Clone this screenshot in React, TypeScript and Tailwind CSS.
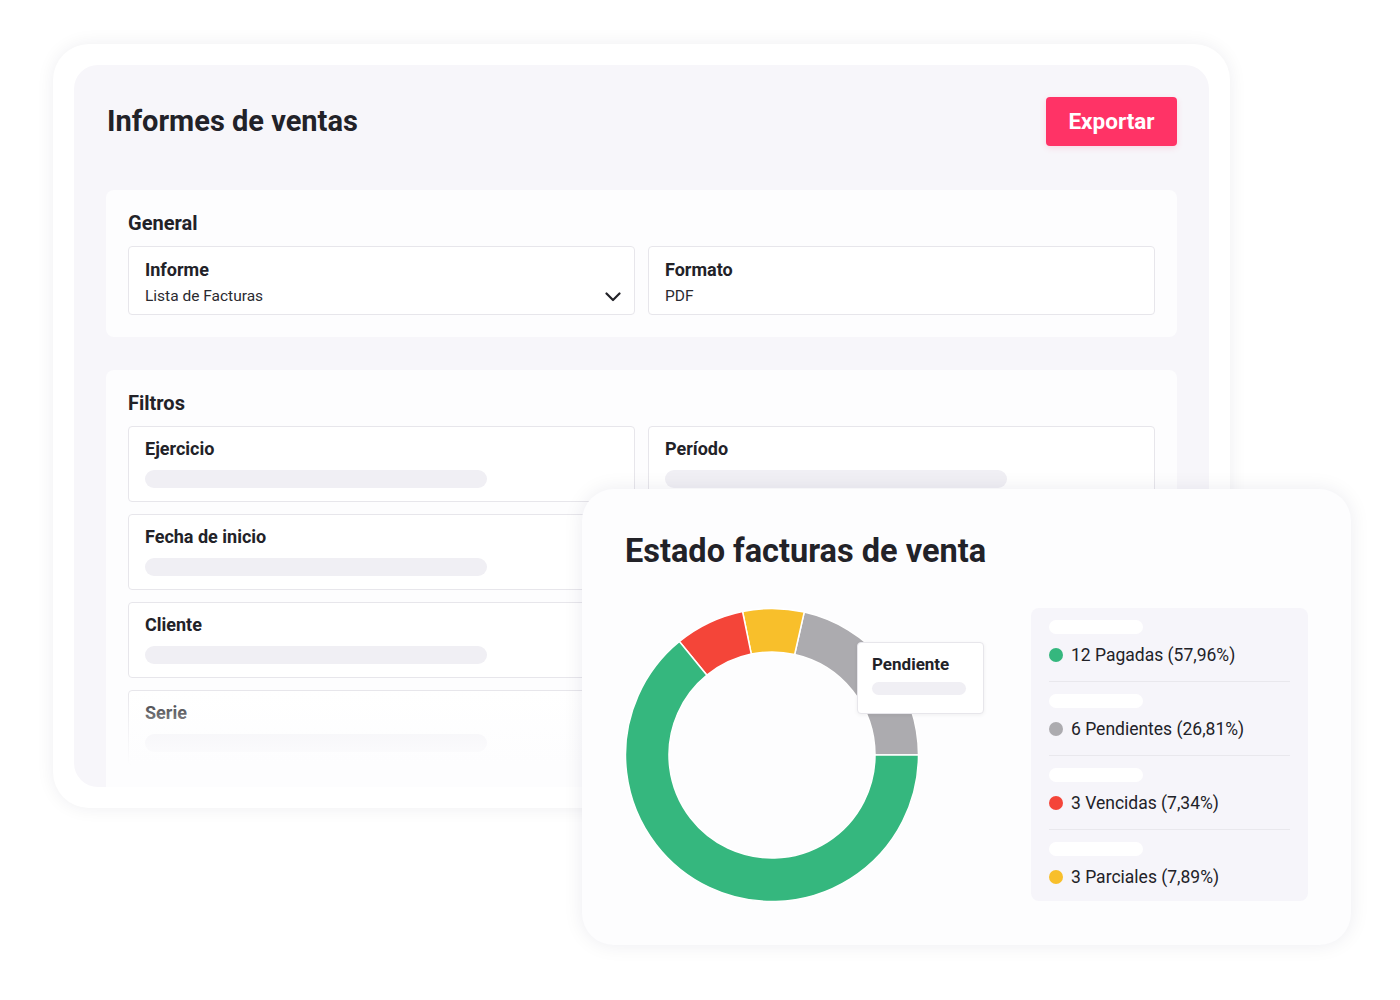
import React from "react";

const font = { fontFamily: "Roboto, 'Noto Sans', sans-serif" };

const CX = 147;
const CY = 147;
const R_OUT = 146.5;
const R_IN = 103;

const pt = (r: number, deg: number) => {
  const a = (deg * Math.PI) / 180;
  return `${(CX + r * Math.cos(a)).toFixed(2)} ${(CY - r * Math.sin(a)).toFixed(2)}`;
};

// angles counter-clockwise from 3 o'clock, as drawn in the picture
const arc = (a0: number, a1: number) => {
  const large = a1 - a0 > 180 ? 1 : 0;
  return `M ${pt(R_OUT, a0)} A ${R_OUT} ${R_OUT} 0 ${large} 0 ${pt(R_OUT, a1)} L ${pt(R_IN, a1)} A ${R_IN} ${R_IN} 0 ${large} 1 ${pt(R_IN, a0)} Z`;
};

const segments = [
  { from: 0, to: 77.3, color: "#acabaf" },
  { from: 77.3, to: 101.6, color: "#f8bf2b" },
  { from: 101.6, to: 129.2, color: "#f44539" },
  { from: 129.2, to: 360, color: "#35b77e" },
];

const legend = [
  { label: "12 Pagadas (57,96%)", color: "bg-[#35b77e]" },
  { label: "6 Pendientes (26,81%)", color: "bg-[#acabaf]" },
  { label: "3 Vencidas (7,34%)", color: "bg-[#f44539]" },
  { label: "3 Parciales (7,89%)", color: "bg-[#f8bf2b]" },
];

const filtros = [
  "Ejercicio",
  "Período",
  "Fecha de inicio",
  "Fecha de fin",
  "Cliente",
  "Vendedor",
  "Serie",
  "Estado",
];

const Chevron = () => (
  <svg width="16" height="10" viewBox="0 0 16 10" fill="none">
    <polyline points="1.5,1.5 8,8 14.5,1.5" stroke="#222228" strokeWidth="2.2" strokeLinecap="round" strokeLinejoin="round" />
  </svg>
);

const FilterField = ({ label }: { label: string }) => (
  <div className="h-[76px] rounded-[4px] border border-[#e7e6eb] bg-white pl-[16px] pt-[10px]">
    <div className="text-[18px] leading-[24px] font-bold text-[#222228]">{label}</div>
    <div className="mt-[9px] h-[18px] w-[342px] rounded-full bg-[#f0eff4]" />
  </div>
);

const Donut = () => (
  <div className="relative w-[294px] h-[294px]">
    <svg width="294" height="294" viewBox="0 0 294 294">
      {segments.map((s) => (
        <path key={s.color} d={arc(s.from, s.to)} fill={s.color} stroke="#ffffff" strokeWidth="1.5" />
      ))}
    </svg>
    <div className="absolute left-[232px] top-[34px] w-[127px] h-[72px] rounded-[4px] border border-[#e7e6eb] bg-white px-[14px] pt-[9px] shadow-[0_1px_4px_rgba(0,0,0,0.06)]">
      <div className="text-[17px] leading-[24px] font-bold text-[#222228]">Pendiente</div>
      <div className="mt-[6px] h-[13px] w-[94px] rounded-full bg-[#f0eff4]" />
    </div>
  </div>
);

export default function App() {
  return (
    <div className="relative w-[1400px] h-[1000px] bg-white overflow-hidden" style={font}>
      {/* informes card */}
      <div className="ml-[53px] mt-[44px] w-[1177px] h-[764px] rounded-[36px] bg-white p-[21px] shadow-[0_0_18px_rgba(30,30,60,0.07)]">
        <div className="h-full rounded-[24px] bg-[#f7f6fa] overflow-hidden px-[32px] pt-[32px] flex flex-col">
          <div className="flex items-center justify-between h-[49px]">
            <h1 className="pl-[1px] text-[29px] font-bold text-[#222228]">Informes de ventas</h1>
            <button className="w-[131px] h-[49px] rounded-[4px] bg-[#ff3366] text-white text-[22.5px] font-bold shadow-[0_2px_6px_rgba(255,51,102,0.15)]">
              Exportar
            </button>
          </div>

          <div className="mt-[44px] rounded-[8px] bg-[#fdfdfe] px-[22px] pt-[21px] pb-[22px]">
            <div className="text-[20px] leading-[24px] font-bold text-[#222228]">General</div>
            <div className="mt-[11px] grid grid-cols-2 gap-x-[13px]">
              <div className="h-[69px] rounded-[4px] border border-[#e7e6eb] bg-white pl-[16px] pr-[13px] pt-[11px] flex items-end justify-between pb-[12px]">
                <div className="self-start">
                  <div className="text-[18px] leading-[24px] font-bold text-[#222228]">Informe</div>
                  <div className="mt-[4px] text-[15.5px] leading-[20px] text-[#2a2a30]">Lista de Facturas</div>
                </div>
                <Chevron />
              </div>
              <div className="h-[69px] rounded-[4px] border border-[#e7e6eb] bg-white pl-[16px] pt-[11px]">
                <div className="text-[18px] leading-[24px] font-bold text-[#222228]">Formato</div>
                <div className="mt-[4px] text-[15.5px] leading-[20px] text-[#2a2a30]">PDF</div>
              </div>
            </div>
          </div>

          <div className="relative mt-[33px] flex-1 rounded-t-[8px] bg-[#fdfdfe] px-[22px] pt-[21px]">
            <div className="text-[20px] leading-[24px] font-bold text-[#222228]">Filtros</div>
            <div className="mt-[11px] grid grid-cols-2 gap-x-[13px] gap-y-[12px]">
              {filtros.map((f) => (
                <FilterField key={f} label={f} />
              ))}
            </div>
            <div className="pointer-events-none absolute left-0 right-0 bottom-0 h-[98px] bg-linear-to-b from-[#fdfdfe00] to-[#fdfdfe] to-78%" />
          </div>
        </div>
      </div>

      {/* estado card */}
      <div className="absolute left-[582px] top-[489px] w-[769px] h-[456px] rounded-[32px] bg-[#fdfdfe] px-[43px] pt-[43px] shadow-[0_0_20px_rgba(30,30,60,0.08)]">
        <h2 className="text-[32.5px] leading-[38px] font-bold text-[#222228]">Estado facturas de venta</h2>
        <div className="mt-[38px] flex items-start justify-between">
          <Donut />
          <div className="w-[277px] h-[293px] rounded-[8px] bg-[#f6f5fa] px-[18px]">
            {legend.map((l, i) => (
              <div
                key={l.label}
                className={i < legend.length - 1 ? "pt-[12px] pb-[14px] border-b border-[#e9e8ed]" : "pt-[12px]"}
              >
                <div className="h-[14px] w-[94px] rounded-full bg-white" />
                <div className="mt-[9px] flex items-center gap-[8px] h-[24px]">
                  <span className={`w-[14px] h-[14px] rounded-full ${l.color}`} />
                  <span className="text-[17.5px] leading-[24px] text-[#222228]">{l.label}</span>
                </div>
              </div>
            ))}
          </div>
        </div>
      </div>
    </div>
  );
}
